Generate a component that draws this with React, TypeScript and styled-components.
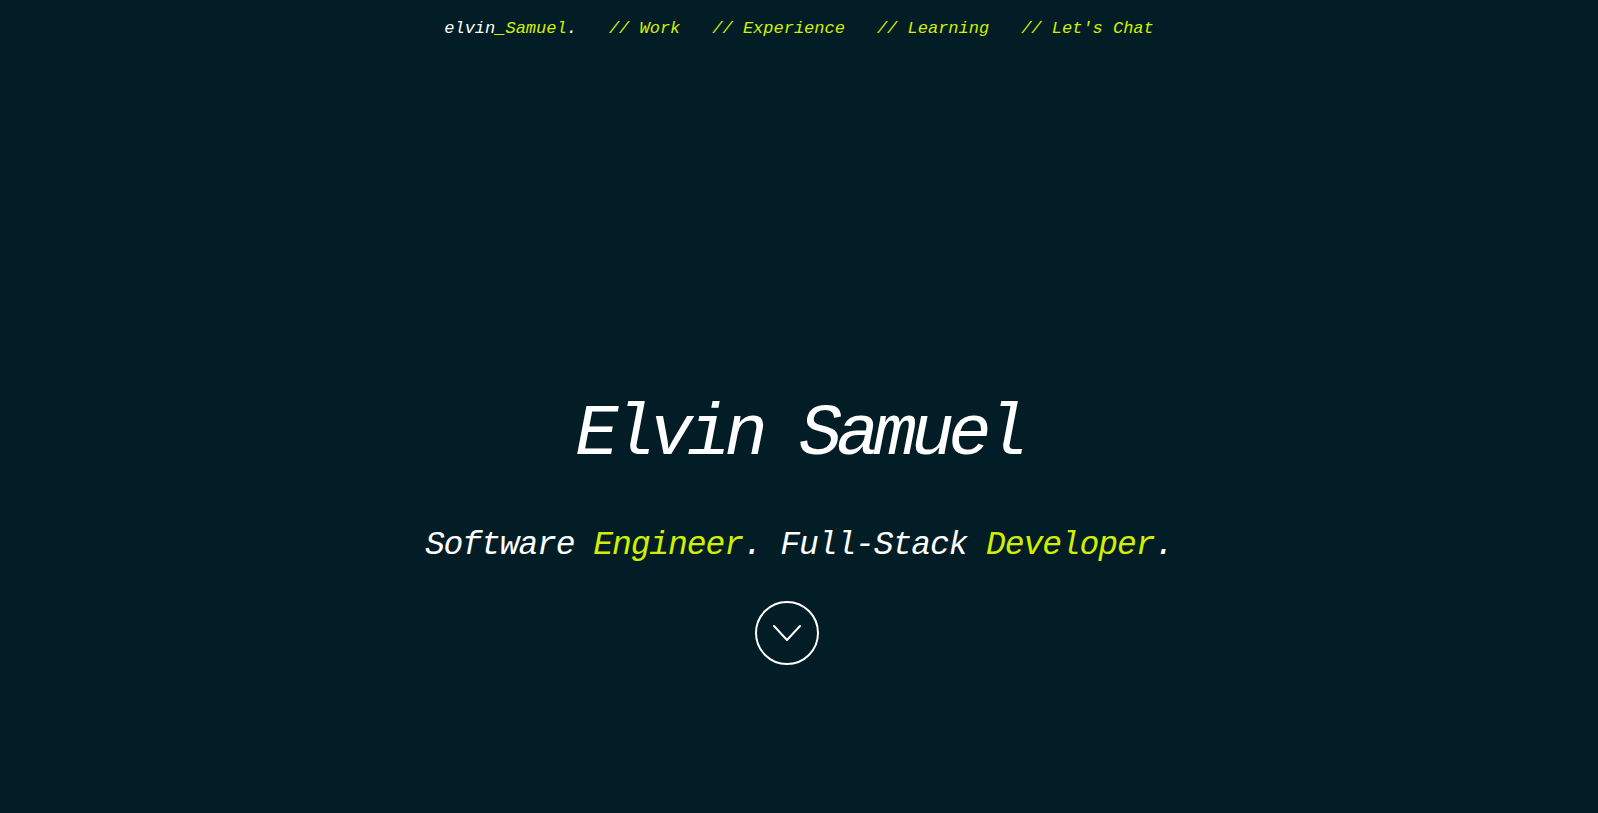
import React from 'react'
import styled, { createGlobalStyle } from 'styled-components'

const GlobalStyle = createGlobalStyle`
  html, body {
    margin: 0;
    padding: 0;
    background: #031d26;
  }
  body {
    font-family: "Liberation Mono", "DejaVu Sans Mono", monospace;
    font-style: italic;
    color: #ffffff;
  }
`

const accent = '#d2ef00'

const Page = styled.div`
  min-height: 100vh;
  display: flex;
  flex-direction: column;
  background: #031d26;
`
const Nav = styled.nav`
  display: flex;
  justify-content: center;
  align-items: center;
  gap: 32px;
  padding: 19px 0 17px;
  font-size: 17px;
  line-height: 1.2;
`
const NavLink = styled.a<{ $accent?: boolean }>`
  color: ${props => (props.$accent ? accent : '#ffffff')};
  text-decoration: none;
  cursor: pointer;
  white-space: pre;
`
const Hl = styled.span`
  color: ${accent};
`
const Hero = styled.section`
  display: flex;
  flex-direction: column;
  align-items: center;
  padding-top: 336px;
`
const Title = styled.h1`
  margin: 0;
  font-size: 72px;
  font-weight: 400;
  letter-spacing: -5.9px;
  line-height: 1.2;
`
const Subtitle = styled.h2`
  margin: 47px 0 0;
  font-size: 33px;
  font-weight: 400;
  letter-spacing: -1.1px;
  line-height: 1.2;
  white-space: pre;
`
const ScrollButton = styled.button`
  margin: 36px 24px 0 0;
  width: 64px;
  height: 64px;
  border-radius: 50%;
  border: 2px solid #ffffff;
  background: transparent;
  display: flex;
  align-items: center;
  justify-content: center;
  padding: 0;
  cursor: pointer;
`

function App() {
  return (
    <Page>
      <GlobalStyle />
      <Nav>
        <NavLink>elvin<Hl>_Samuel</Hl>.</NavLink>
        <NavLink $accent>// Work</NavLink>
        <NavLink $accent>// Experience</NavLink>
        <NavLink $accent>// Learning</NavLink>
        <NavLink $accent>// Let's Chat</NavLink>
      </Nav>
      <Hero>
        <Title>Elvin Samuel</Title>
        <Subtitle>
          Software <Hl>Engineer</Hl>. Full-Stack <Hl>Developer</Hl>.
        </Subtitle>
        <ScrollButton aria-label="Scroll down">
          <svg width="28" height="20" viewBox="0 0 28 20" fill="none">
            <polyline points="1,3 14,17 27,3" stroke="#ffffff" strokeWidth="2" strokeLinecap="round" strokeLinejoin="round" />
          </svg>
        </ScrollButton>
      </Hero>
    </Page>
  )
}

export default App
